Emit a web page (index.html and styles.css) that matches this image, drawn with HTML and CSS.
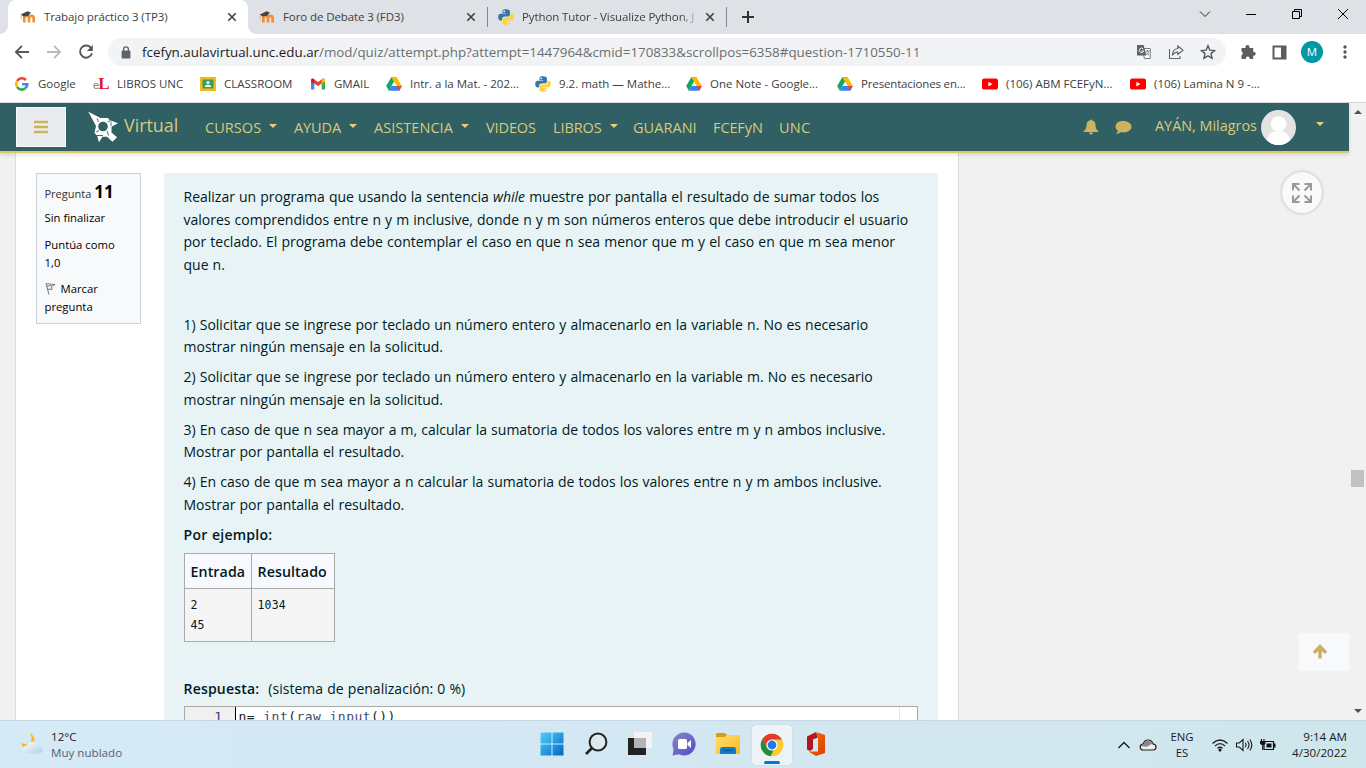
FILE: index.html
```html
<!DOCTYPE html>
<html lang="es">
<head>
<meta charset="utf-8">
<title>Trabajo práctico 3 (TP3)</title>
<link rel="stylesheet" href="styles.css">
</head>
<body>
<svg class="defs" width="0" height="0">
  <defs>
    <linearGradient id="gWin" x1="0" y1="0" x2="1" y2="1"><stop offset="0" stop-color="#4fd0fb"/><stop offset="1" stop-color="#0067c7"/></linearGradient>
    <linearGradient id="gChat" x1="0" y1="0" x2="1" y2="1"><stop offset="0" stop-color="#8b87c8"/><stop offset="1" stop-color="#4f4cc8"/></linearGradient>
    <linearGradient id="gFold" x1="0" y1="0" x2="1" y2="1"><stop offset="0" stop-color="#ffdf73"/><stop offset="1" stop-color="#f9b91b"/></linearGradient>
    <linearGradient id="gOff" x1="0" y1="0" x2="1" y2="1"><stop offset="0" stop-color="#f27a08"/><stop offset="1" stop-color="#d83b01"/></linearGradient>
    <linearGradient id="gCloud" x1="0" y1="0" x2="1" y2="1"><stop offset="0" stop-color="#fbfdff"/><stop offset="1" stop-color="#b5cfe8"/></linearGradient>
  </defs>
  <symbol id="moodle" viewBox="0 0 16 16"><path d="M4.300 13.500V9q0-2.200 2.300-2.200T9 9v4.500M9 9q0-2.200 2.300-2.200T13.700 9v4.500" fill="none" stroke="#f2903a" stroke-width="2.700"/><path d="M.8 5.600 7.500 2.200l3.300 1.200L8.300 6.800 3.500 7.500z" fill="#4a4440"/><path d="M1.300 6v4.500" stroke="#d9b08b" stroke-width=".8"/></symbol>
  <symbol id="python" viewBox="0 0 16 16"><path d="M7.800.3C4.600.3 4.500 1.600 4.500 2.600v1.600h3.700v.6H2.800C1.200 4.800.2 6 .2 8s.9 3.500 2.500 3.500h1.400V9.700c0-1.200 1-2.300 2.400-2.300h3.400c1.100 0 2-.9 2-2V2.600C11.900 1 10.500.3 7.800.3z" fill="#3a75a8"/><path d="M8.200 15.700c3.200 0 3.300-1.300 3.300-2.300v-1.600H7.800v-.6h5.400c1.600 0 2.600-1.200 2.600-3.200s-.9-3.500-2.500-3.500h-.9v1.700c0 1.200-1 2.200-2.400 2.200H6.400c-1.100 0-2 .9-2 2v3c0 1.600 1.400 2.300 3.800 2.300z" fill="#fdd43b"/><circle cx="6.200" cy="2.400" r=".8" fill="#fff"/><circle cx="9.900" cy="13.600" r=".8" fill="#fff"/></symbol>
  <symbol id="drive" viewBox="0 0 16 16"><path d="M5.300 1.300h5.400L5.600 10 2.800 14.700.2 10.100z" fill="#11a861"/><path d="M5.300 1.300h5.400l5.100 8.800h-5.200z" fill="#ffba00"/><path d="M5.400 10.100h10.400l-2.600 4.600H2.800z" fill="#3b82f6"/><path d="M10.600 10.100h5.200l-2.600 4.600z" fill="#ea4335"/><path d="M8 5.900 5.500 10.100h5z" fill="#fff"/></symbol>
  <symbol id="youtube" viewBox="0 0 16 16"><rect y="2.600" width="16" height="11" rx="2.200" fill="#f00"/><path d="M6.400 5.800v4.600l4-2.300z" fill="#fff"/></symbol>
  <symbol id="close" viewBox="0 0 10 10"><path d="m1.300 1.300 7.400 7.400m0-7.400L1.300 8.700" stroke="#3c4043" stroke-width="1.600"/></symbol>
</svg>

<header class="tabs">
  <div class="tab active"><svg class="fav"><use href="#moodle"/></svg><span>Trabajo práctico 3 (TP3)</span><svg class="x"><use href="#close"/></svg></div>
  <div class="tab"><svg class="fav"><use href="#moodle"/></svg><span>Foro de Debate 3 (FD3)</span><svg class="x"><use href="#close"/></svg></div>
  <div class="tab sep"><svg class="fav"><use href="#python"/></svg><span class="fade">Python Tutor - Visualize Python, J</span><svg class="x"><use href="#close"/></svg></div>
  <div class="newtab"><svg width="12" height="12" viewBox="0 0 12 12"><path d="M6 0v12M0 6h12" stroke="#303336" stroke-width="2"/></svg></div>
  <div class="winctl">
    <svg width="12" height="12" viewBox="0 0 12 12"><path d="m1 3.500 5 5 5-5" fill="none" stroke="#222"/></svg>
    <svg width="12" height="12" viewBox="0 0 12 12"><path d="M1 6.500h10" stroke="#000"/></svg>
    <svg width="12" height="12" viewBox="0 0 12 12"><path d="M1.500 3.500h7v7h-7zM3.500 3.500v-2h7v7h-2" fill="none" stroke="#000"/></svg>
    <svg width="12" height="12" viewBox="0 0 12 12"><path d="m1 1 10 10M11 1 1 11" stroke="#000"/></svg>
  </div>
</header>

<div class="toolbar">
  <svg class="back" width="16" height="16" viewBox="0 0 16 16"><path d="M15 8H2.500M8 1.800 1.800 8 8 14.200" fill="none" stroke="#54585c" stroke-width="1.800"/></svg>
  <svg class="fwd" width="16" height="16" viewBox="0 0 16 16"><path d="M1 8h12.500M8 1.800 14.200 8 8 14.200" fill="none" stroke="#b9bbbd" stroke-width="1.800"/></svg>
  <svg class="reload" width="16" height="16" viewBox="0 0 16 16"><path d="M13.300 4.300A6.100 6.100 0 1 0 14 9.300" fill="none" stroke="#54585c" stroke-width="1.900"/><path d="M14.800 1v6H8.800z" fill="#54585c"/></svg>
  <div class="omni">
    <svg class="lock" width="10" height="13" viewBox="0 0 10 13"><rect x=".6" y="4.500" width="8.800" height="8" rx="1" fill="#5f6368"/><path d="M2.600 5V3.300a2.400 2.400 0 0 1 4.800 0V5" fill="none" stroke="#5f6368" stroke-width="1.300"/></svg>
    <span class="url"><b>fcefyn.aulavirtual.unc.edu.ar</b>/mod/quiz/attempt.php?attempt=1447964&amp;cmid=170833&amp;scrollpos=6358#question-1710550-11</span>
    <svg width="16" height="16" viewBox="0 0 16 16"><path d="M6 4.500h8.300v10H8.500z" fill="#fff" stroke="#777b7f"/><path d="M1 1h6.500l3 10.500H1z" fill="#5f6368"/><path d="M7.300 5A2.200 2.200 0 1 0 7.600 7H5.500" fill="none" stroke="#fff"/><path d="M9.500 7h4M11.500 6v1.500m1.300-.3q-.8 3-2.500 4m.2-2.700 2.500 3" fill="none" stroke="#777b7f" stroke-width=".9"/></svg>
    <svg width="16" height="16" viewBox="0 0 16 16"><path d="M1.500 5v9.500H12V12" fill="none" stroke="#62666a" stroke-width="1.100"/><path d="M9.800 2 15 6.300l-5.200 4.200V8.200Q6 8.200 4.300 11.500 4.500 5 9.800 4.500z" fill="none" stroke="#62666a" stroke-width="1.200"/></svg>
    <svg width="16" height="16" viewBox="0 0 16 16"><path d="m8 1.700 1.800 4.400 4.800.4-3.600 3.100 1.100 4.700L8 11.800l-4.100 2.500L5 9.600 1.400 6.500l4.800-.4z" fill="none" stroke="#54585c" stroke-width="1.400"/></svg>
  </div>
  <svg class="ext" width="16" height="16" viewBox="0 0 16 16"><path d="M1.500 4h4V3a2 2 0 0 1 4 0v1h3.700v3.700h.5a2 2 0 0 1 0 4h-.5V15H9.600v-.5a1.900 1.900 0 0 0-3.800 0v.5H1.500v-4a2 2 0 0 0 0-3.700z" fill="#5a5e62"/></svg>
  <svg class="side" width="15" height="15" viewBox="0 0 15 15"><path d="M1.500 1.500h12v12h-12z" fill="#fff" stroke="#5a5e62" stroke-width="2"/><path d="M9 1h5v13H9z" fill="#5a5e62"/></svg>
  <span class="me">M</span>
  <svg class="dots" width="4" height="14" viewBox="0 0 4 14"><g fill="#54585c"><circle cx="2" cy="2" r="1.700"/><circle cx="2" cy="7" r="1.700"/><circle cx="2" cy="12" r="1.700"/></g></svg>
</div>

<nav class="bookmarks">
  <a class="w77"><svg viewBox="0 0 16 16"><g fill="none" stroke-width="2.600"><path d="M3.200 4.900A5.500 5.500 0 0 1 11.900 4" stroke="#ea4335"/><path d="M3.200 4.900a5.600 5.600 0 0 0 0 6.200" stroke="#fbbc05"/><path d="M3.200 11.100A5.500 5.500 0 0 0 11.300 12.300" stroke="#34a853"/><path d="M11.300 12.300Q13.300 10.700 13.300 8.200H8.100" stroke="#4285f4"/></g></svg>Google</a>
  <a class="w107"><span class="el"><i>e</i>L</span>LIBROS UNC</a>
  <a class="w110"><svg viewBox="0 0 16 16"><path d="M0 1h16v14H0z" fill="#f5ba14"/><path d="M2.500 3.500h11v9h-11z" fill="#3c9a63"/><circle cx="8" cy="6.500" r="1.600" fill="#fff"/><path d="M4.800 11q0-2.300 3.200-2.300t3.200 2.300z" fill="#fff"/></svg>CLASSROOM</a>
  <a class="w76"><svg viewBox="0 0 16 16"><path d="M1 13.500V4.500l3.300 2.500v6.500z" fill="#4285f4"/><path d="M15 13.500V4.500L11.700 7v6.500z" fill="#34a853"/><path d="M1 5V3.600Q2 1.800 3.800 2.900L8 6.100l4.200-3.200q1.800-1.100 2.800.7V5L8 10.300z" fill="#ea4335"/><path d="M11.700 3.300Q14.500 1.200 15 4v1.500l-3.300 2.500z" fill="#fbbc04"/><path d="M1 4v1.500l3.300 2.500V3.300Q1.500 1.200 1 4z" fill="#c5221f"/></svg>GMAIL</a>
  <a class="w149"><svg><use href="#drive"/></svg>Intr. a la Mat. - 202...</a>
  <a class="w151"><svg><use href="#python"/></svg>9.2. math — Mathe...</a>
  <a class="w152"><svg><use href="#drive"/></svg>One Note - Google...</a>
  <a class="w144 tight"><svg><use href="#drive"/></svg>Presentaciones en...</a>
  <a class="w148"><svg><use href="#youtube"/></svg>(106) ABM FCEFyN...</a>
  <a><svg><use href="#youtube"/></svg>(106) Lamina N 9 -...</a>
</nav>

<div class="view">
  <div class="site">
    <div class="navbar">
      <button class="burger"><svg width="16" height="14" viewBox="0 0 16 14"><path d="M1 2h14M1 7h14M1 12h14" stroke="#cbb35f" stroke-width="2.300"/></svg></button>
      <div class="brand"><svg width="32" height="32" viewBox="0 0 32 32"><path d="M.3.800 12.500 7H20l1.500 2 8.500 3.300-6.500 3.500v5.700l5.500 4.700-4.500 4.500-5.500-5h-4.500l-3.500 5.500-2-6.700L6.500 22 8 15z" fill="#fff"/><circle cx="15" cy="15.500" r="4.800" fill="#306063"/><path d="m9 7.500 1.500 3.500M8 21l3-1.500M19.500 11l3-1.500M19 20l1.500 4.500M9 24.500h6M23 10.500v4.500" fill="none" stroke="#306063" stroke-width=".9"/></svg><span>Virtual</span></div>
      <div class="menu">
        <a class="drop m1">CURSOS</a><a class="drop m2">AYUDA</a><a class="drop m3">ASISTENCIA</a><a class="m4">VIDEOS</a><a class="drop m5">LIBROS</a><a class="m6">GUARANI</a><a class="m7">FCEFyN</a><a class="m8">UNC</a>
      </div>
      <svg class="bell" width="16" height="16" viewBox="0 0 16 16"><path d="M8 .5q1 0 1 1.100 3.500.7 3.500 4.400 0 4.500 3 6.300v.7H.5v-.7q3-1.800 3-6.300 0-3.700 3.500-4.400 0-1.100 1-1.100zM6 13.500h4q0 2-2 2t-2-2z" fill="#cbb35f"/></svg>
      <svg class="chat" width="17" height="16" viewBox="0 0 17 16"><path d="M8.500 2c4.500 0 8 2.600 8 5.700s-3.500 5.700-8 5.700q-1.200 0-2.300-.3Q4 15 1 14.900q1.800-1.400 1.700-3.300Q.5 10 .5 7.700.5 2 8.500 2z" fill="#cbb35f"/></svg>
      <span class="user">AYÁN, Milagros</span>
      <svg class="avatar" width="35" height="35" viewBox="0 0 35 35"><clipPath id="cAv"><circle cx="17.500" cy="17.500" r="17.500"/></clipPath><g clip-path="url(#cAv)"><path d="M0 0h35v35H0z" fill="#e3e3e3"/><circle cx="17.500" cy="14" r="7.800" fill="#fff"/><path d="M5.500 35q0-11 7-13.500h10q7 2.500 7 13.500z" fill="#fff"/></g></svg>
      <i class="caret"></i>
    </div>
    <div class="body">
      <main class="region">
        <aside class="info">
          <p class="num">Pregunta <b>11</b></p>
          <p class="st">Sin finalizar</p>
          <p class="gr">Puntúa como<br>1,0</p>
          <p class="fl"><svg width="11" height="13" viewBox="0 0 11 13"><path d="M1 1.500 4 12.500M1 1.700l9 .8-3.500 2 .5 3-5-.5M1.500 4.300l5-.8" fill="none" stroke="#777" stroke-width="1"/></svg>Marcar<br>pregunta</p>
        </aside>
        <section class="question">
          <p>Realizar un programa que usando la sentencia <em>while</em> muestre por pantalla el resultado de sumar todos los<br>valores comprendidos entre n y m inclusive, donde n y m son números enteros que debe introducir el usuario<br>por teclado. El programa debe contemplar el caso en que n sea menor que m y el caso en que m sea menor<br>que n.</p>
          <p class="blank"></p>
          <p>1) Solicitar que se ingrese por teclado un número entero y almacenarlo en la variable n. No es necesario<br>mostrar ningún mensaje en la solicitud.</p>
          <p>2) Solicitar que se ingrese por teclado un número entero y almacenarlo en la variable m. No es necesario<br>mostrar ningún mensaje en la solicitud.</p>
          <p>3) En caso de que n sea mayor a m, calcular la sumatoria de todos los valores entre m y n ambos inclusive.<br>Mostrar por pantalla el resultado.</p>
          <p>4) En caso de que m sea mayor a n calcular la sumatoria de todos los valores entre n y m ambos inclusive.<br>Mostrar por pantalla el resultado.</p>
          <p class="bold">Por ejemplo:</p>
          <table><tr><th>Entrada</th><th>Resultado</th></tr><tr><td>2<br>45</td><td>1034</td></tr></table>
          <p class="resp"><b>Respuesta:</b><span>(sistema de penalización: 0 %)</span></p>
          <div class="editor"><span class="gut">1</span><code>n= <i>int</i>(<i>raw_input</i>())</code><span class="margin"></span></div>
        </section>
      </main>
      <div class="float">
        <button class="full"><svg width="20" height="20" viewBox="0 0 20 20"><g fill="none" stroke="#999" stroke-width="2"><path d="M1 7.500V1h6.500M1 1l6.500 6.500M12.500 1H19v6.500M19 1l-6.500 6.500M1 12.500V19h6.500M1 19l6.500-6.500M12.500 19H19v-6.500M19 19l-6.500-6.500"/></g></svg></button>
        <button class="top"><svg width="16" height="16" viewBox="0 0 16 16"><path d="M8 14.500V3M2 8.700l6-6 6 6" fill="none" stroke="#cbb05f" stroke-width="3.400"/></svg></button>
      </div>
    </div>
  </div>
  <div class="scroll"><i class="up"></i><i class="thumb"></i><i class="down"></i></div>
</div>

<footer class="taskbar">
  <svg class="wicon" width="24" height="22" viewBox="0 0 24 22"><path d="M9.500 0q4.500 6 0 9.500-3.500 3-8 .5 0 5 6 5.500 7-.5 7-8.500Q13.500 1.500 9.500 0z" fill="#fbb515"/><path d="M7 20.500q-4.500 0-4.500-4 .2-3.700 4.300-4Q9 8 13 8.500q4 .5 5 4.200 4.500.3 4.500 4 0 3.800-4.500 3.800z" fill="url(#gCloud)"/></svg>
  <div class="weather">12°C<br><span>Muy nublado</span></div>
  <div class="apps">
    <span><svg width="24" height="24" viewBox="0 0 24 24"><path d="M.5.500h11v11H.5zm12 0h11v11h-11zm-12 12h11v11H.5zm12 0h11v11h-11z" fill="url(#gWin)"/></svg></span>
    <span><svg width="24" height="24" viewBox="0 0 24 24"><circle cx="14" cy="10" r="8.400" fill="#dbe9ef" stroke="#222" stroke-width="2"/><path d="m8 16-6 6" stroke="#222" stroke-width="2.600"/></svg></span>
    <span><svg width="24" height="24" viewBox="0 0 24 24"><path d="M0 6h18v17H0z" fill="#222"/><path d="M6 0h18v16H6z" fill="#f3f3f3"/><path d="M6 6h12v10H6z" fill="#b3b3b3"/></svg></span>
    <span><svg width="24" height="24" viewBox="0 0 24 24"><path d="M12 .5a11.500 11.500 0 1 1-5 21.800L.6 23.500 1.500 17A11.500 11.500 0 0 1 12 .5z" fill="url(#gChat)"/><rect x="6" y="7" width="9" height="10" rx="1.500" fill="#fff"/><path d="m15.500 11 3.500-3v8l-3.500-3z" fill="#fff"/></svg></span>
    <span><svg width="24" height="24" viewBox="0 0 24 24"><path d="M0 2.500Q0 1 1.500 1H9l2 2v4H0z" fill="#d99a12"/><path d="M0 5h9l2-2h12q1 0 1 1v17q0 1-1 1H1q-1 0-1-1z" fill="url(#gFold)"/><path d="M4 22v-4.500Q4 15 6.500 15h11q2.500 0 2.500 2.500V22z" fill="#1479c9"/><path d="M7.500 18.500h9" stroke="#0a549c" stroke-width="1.300"/></svg></span>
    <span class="on"><svg width="24" height="24" viewBox="0 0 24 24"><circle cx="12" cy="12" r="11.300" fill="#fcc934"/><path d="M2.200 6.400A11.300 11.300 0 0 1 21.800 6.400H12L7.200 14.800z" fill="#e33b2e"/><path d="M2.200 6.400 7.200 14.800 12 17.600h1.500l-3 5.600A11.300 11.300 0 0 1 2.200 6.400z" fill="#1e8e3e"/><circle cx="12" cy="12" r="5.600" fill="#fff"/><circle cx="12" cy="12" r="4.400" fill="#2478ee"/></svg></span>
    <span><svg width="24" height="24" viewBox="0 0 24 24"><path d="M12 0 3 4.500v13L6 19l3-2V7.500l5-2z" fill="#b3161d"/><path d="m12 0 9 3v18l-9 3-7.500-4.500H14V5z" fill="url(#gOff)"/></svg></span>
  </div>
  <div class="tray">
    <svg class="chev" width="14" height="10" viewBox="0 0 14 10"><path d="m1.500 8 5.500-5.500L12.500 8" fill="none" stroke="#1a1a1a" stroke-width="1.300"/></svg>
    <svg class="cld" width="18" height="14" viewBox="0 0 18 14"><path d="M4.500 12Q1.200 12 1.200 9q0-2.800 3-3Q5.500 2 9 2q4 0 5 3.900 3 .4 3 3.100 0 3-3.300 3z" fill="#eee" stroke="#222" stroke-width="1.200"/><path d="M2 8q.2-1.500 2.500-1.500Q6 2.500 9 2.600q3.300.2 4.500 3.400-2 0-4 2-1.500 1.500-7.500 0z" fill="#8a8a8a"/></svg>
    <div class="lang">ENG<br>ES</div>
    <svg class="wifi" width="18" height="14" viewBox="0 0 18 14"><g fill="none" stroke="#1a1a1a" stroke-width="1.200"><path d="M1.500 5.500q7.500-7 15 0M4 8q5-4.700 10 0M6.400 10.400q2.600-2.300 5.200 0"/></g><circle cx="9" cy="12" r="1.500" fill="#111"/></svg>
    <svg class="vol" width="18" height="14" viewBox="0 0 18 14"><g fill="none" stroke="#1a1a1a" stroke-width="1.100"><path d="M1.500 5h2.800L8 1.500v11L4.300 9H1.500zM10.300 4.700q1.500 2.300 0 4.600M12.500 3q3 4 0 8M14.800 1.500q4 5.500 0 11"/></g></svg>
    <svg class="bat" width="18" height="14" viewBox="0 0 18 14"><path d="M5 3.500h9.500v8H5z" fill="none" stroke="#111" stroke-width="1.200"/><path d="M7.500 5.500h5v4h-5zM15 5.500h1.500v4H15zM1 3h5.500v2.500L5 7H2.500L1 5.500z" fill="#111"/><path d="M2.500 1v2M5 1v2M3.700 7v5" stroke="#111" stroke-width="1.100"/></svg>
    <div class="clock">9:14 AM<br>4/30/2022</div>
  </div>
</footer>
</body>
</html>
```

FILE: styles.css
```css
* { box-sizing: border-box; }
body { margin: 0; width: 1366px; height: 768px; overflow: hidden; display: flex; flex-direction: column; background: #fff; font-family: "Open Sans", "Noto Sans", sans-serif; color: #001a1e; white-space: nowrap; }
p { margin: 0; }
svg { display: block; flex: none; }
button { border: 0; padding: 0; }
.defs { position: absolute; }

.tabs { height: 34px; flex: none; display: flex; background: #dee1e6; padding-left: 8px; font-size: 11.500px; color: #3c4043; letter-spacing: -.1px; }
.tab { width: 239px; height: 34px; display: flex; align-items: center; padding: 0 11px 0 12px; position: relative; }
.tab > span { padding-bottom: 2px; }
.tab.active { width: 240px; background: #fff; border-radius: 8px 8px 0 0; }
.tab.active::before, .tab.active::after { content: ""; position: absolute; bottom: 0; width: 8px; height: 8px; }
.tab.active::before { left: -8px; background: radial-gradient(circle at 0 0, #dee1e6 7.500px, #fff 8px); }
.tab.active::after { right: -8px; background: radial-gradient(circle at 100% 0, #dee1e6 7.500px, #fff 8px); }
.fav { width: 16px; height: 16px; margin-right: 8px; }
.tab.active + .tab .fav { margin-left: -1px; }
.tab .x { width: 10px; height: 10px; margin-left: auto; }
.tab.sep { border-left: 1px solid #83878c; border-right: 1px solid #83878c; height: 20px; margin-top: 7px; width: 240px; padding: 0 11px 0 10px; }
.tab .fade { width: 176px; overflow: hidden; -webkit-mask-image: linear-gradient(90deg, #000 158px, transparent 178px); mask-image: linear-gradient(90deg, #000 158px, transparent 178px); }
.newtab { padding: 11px 0 0 15px; }
.winctl { margin-left: auto; display: flex; gap: 34px; padding: 8px 17px 0 0; }

.toolbar { height: 36px; flex: none; display: flex; align-items: center; padding-left: 14px; }
.fwd { margin-left: 16px; }
.reload { margin-left: 16px; }
.omni { margin-left: 14px; width: 1118px; height: 28px; border-radius: 14px; background: #f1f3f4; display: flex; align-items: center; padding: 0 10px 0 13px; gap: 16px; }
.lock { margin-right: -5px; }
.url { width: 982px; font-size: 13.370px; color: #6b6f73; }
.url b { font-weight: 400; color: #202124; }
.ext { margin-left: 14px; }
.side { margin-left: 16px; }
.me { width: 22px; height: 22px; border-radius: 50%; background: #0097a7; color: #fff; font-size: 11.500px; line-height: 22px; text-align: center; margin-left: 14px; }
.dots { margin-left: 20px; }

.bookmarks { height: 33px; flex: none; border-bottom: 1px solid #d5d7da; display: flex; padding: 0 0 5px 14px; font-size: 11.500px; color: #3c4043; }
.bookmarks a { display: flex; align-items: center; gap: 8px; flex: none; }
.bookmarks svg { width: 16px; height: 16px; }
.w77 { width: 79px; }
.w107 { width: 107px; } .w110 { width: 110px; } .w76 { width: 76px; } .w149 { width: 149px; } .w151 { width: 151px; } .w152 { width: 151px; } .w144 { width: 145px; } .w148 { width: 148px; }
.tight { letter-spacing: -.15px; }
.el { width: 16px; font: bold 17px "Liberation Serif", serif; color: #e8141c; }
.el i { font: 11px "Liberation Sans", sans-serif; color: #777; margin-right: -1px; }

.view { height: 617px; flex: none; display: flex; overflow: hidden; }
.site { width: 1349px; display: flex; flex-direction: column; }
.navbar { height: 50px; flex: none; background: #306063; border-bottom: 2px solid #dfc76f; display: flex; align-items: center; padding-left: 16px; color: #d9ca7c; box-shadow: 0 2px 4px rgba(0,0,0,.12); position: relative; }
.burger { width: 50px; height: 40px; background: #e9ecef; border: 1px solid #f8f9fa; display: grid; place-items: center; }
.brand { width: 139px; padding-left: 22px; display: flex; gap: 4px; font-size: 17.900px; }
.brand span { line-height: 29px; }
.menu { display: flex; flex: 1; font-size: 14.500px; letter-spacing: -.1px; }
.menu a { display: flex; align-items: center; flex: none; }
.drop::after, .caret { content: ""; border: 4px solid transparent; border-top-color: #e6d173; border-bottom: 0; }
.drop::after { margin-left: 8px; margin-top: -3px; }
.m1 { width: 89px; } .m2 { width: 80px; } .m3 { width: 112px; } .m4 { width: 67px; } .m5 { width: 80px; } .m6 { width: 80px; } .m7 { width: 66px; }
.m3 { letter-spacing: .05px; } .m8 { letter-spacing: .2px; } .m6 { letter-spacing: .05px; } .m1 { letter-spacing: .05px; }
.chat { margin-left: 16px; }
.user { margin-left: 23px; width: 105px; font-size: 14.400px; margin-top: -4px; }
.avatar { margin-left: 1px; }
.caret { margin: -7px 25px 0 20px; }

.body { flex: 1; display: flex; justify-content: space-between; background: #f1f1f1; min-height: 0; }
.region { margin-left: 15px; width: 944px; background: #fff; border: solid #dcdcdc; border-width: 0 1px; padding: 20px 20px 0; display: flex; gap: 23px; }
.info { width: 105px; height: 151px; background: #f8f9fa; border: 1px solid #cad0d7; padding: 6px 7.500px; font-size: 11.300px; line-height: 18px; color: #000; }
.num { line-height: 24px; color: #333; font-size: 11px; }
.num b { font-size: 17px; color: #000; }
.st { margin-top: 3px; }
.gr { margin-top: 9px; }
.fl { margin-top: 8px; }
.fl svg { display: inline-block; margin: 0 5px -2px 0; }
.question { width: 774px; height: 570px; background: #e7f3f5; padding: 13px 20px 0 19.500px; font-size: 14px; line-height: 22.500px; word-spacing: .47px; }
.question p { margin-bottom: 7.500px; height: 45px; }
.question p:first-child { height: 90px; }
.question .blank { height: 22.500px; }
.question p.bold { height: 22.500px; margin-bottom: 7px; font-weight: 600; letter-spacing: .27px; }
table { border-collapse: collapse; word-spacing: 0; table-layout: fixed; width: 151px; }
th, td { border: 1px solid #aaa; padding: 0 6px; text-align: left; vertical-align: top; }
th { background: #f8f8ff; font-weight: 600; font-size: 14.200px; height: 35px; vertical-align: middle; letter-spacing: .1px; padding-top: 2px; padding-right: 0; }
th:first-child { width: 67px; }
td { background: #f5f5f5; height: 53px; font: 11.500px/20px "DejaVu Sans Mono", monospace; letter-spacing: .2px; padding-top: 6px; }
.question .resp { height: 22.500px; margin: 36px 0 5px; display: flex; gap: 9px; }
.resp b { font-weight: 600; letter-spacing: .2px; }
.resp span { letter-spacing: .02px; }
.editor { width: 734px; height: 60px; border: 1px solid #a9a9a9; background: #fff; display: flex; font: 13px/19px "DejaVu Sans Mono", monospace; letter-spacing: .45px; word-spacing: 0; color: #222; }
.gut { width: 50px; background: #f0f0f0; text-align: right; padding-right: 12px; color: #333a80; }
.editor code { font: inherit; border-left: 1px solid #000; padding-left: 3px; flex: 1; }
.editor i { font-style: normal; color: #3c4c72; }
.margin { border-left: 1px solid #e5e5e5; width: 18px; }
.float { width: 67px; display: flex; flex-direction: column; align-items: flex-end; }
.full { width: 40px; height: 41px; border-radius: 50%; background: #f8f9fa; margin: 19px 27px 0 0; display: grid; place-items: center; box-shadow: 0 0 3px 1px rgba(0,0,0,.15); }
.top { width: 50px; height: 38px; background: #f8f9fa; margin-top: 420px; padding-left: 13px; }
.scroll { width: 17px; background: #f1f1f1; display: flex; flex-direction: column; align-items: center; }
.up { border: 4px solid transparent; border-top: 0; border-bottom-color: #505050; margin-top: 7px; }
.thumb { width: 13px; height: 17px; background: #c1c1c1; margin-top: 356px; }
.down { border: 4px solid transparent; border-bottom: 0; border-top-color: #505050; margin-top: 222px; }

.taskbar { height: 48px; flex: none; display: flex; align-items: center; border-top: 1px solid #c5d8e3; background: linear-gradient(90deg, #d5eaf7, #d3e7f1 60%, #cfe6ed); font-size: 11.600px; line-height: 16px; color: #1a1a1a; }
.wicon { margin-left: 20px; margin-top: -2px; }
.weather { margin-left: 7px; width: 481px; }
.weather span { color: #55636c; }
.apps { display: flex; gap: 4px; }
.apps span { width: 40px; height: 40px; display: grid; place-items: center; position: relative; }
.apps .on { background: #ecf4f8; border-radius: 4px; box-shadow: 0 0 1px #9fb4bf; }
.apps span:not(.on) { padding-bottom: 1px; }
.on::after { content: ""; position: absolute; bottom: 1px; left: 12px; width: 16px; height: 3px; border-radius: 2px; background: #0078d4; }
.tray { margin-left: auto; display: flex; align-items: center; padding-right: 19px; }
.cld { margin-left: 8px; }
.lang { width: 50px; text-align: center; font-size: 11.300px; }
.wifi { margin-left: 4px; }
.vol { margin-left: 6px; }
.bat { margin-left: 6px; }
.clock { width: 70px; text-align: right; }
```
